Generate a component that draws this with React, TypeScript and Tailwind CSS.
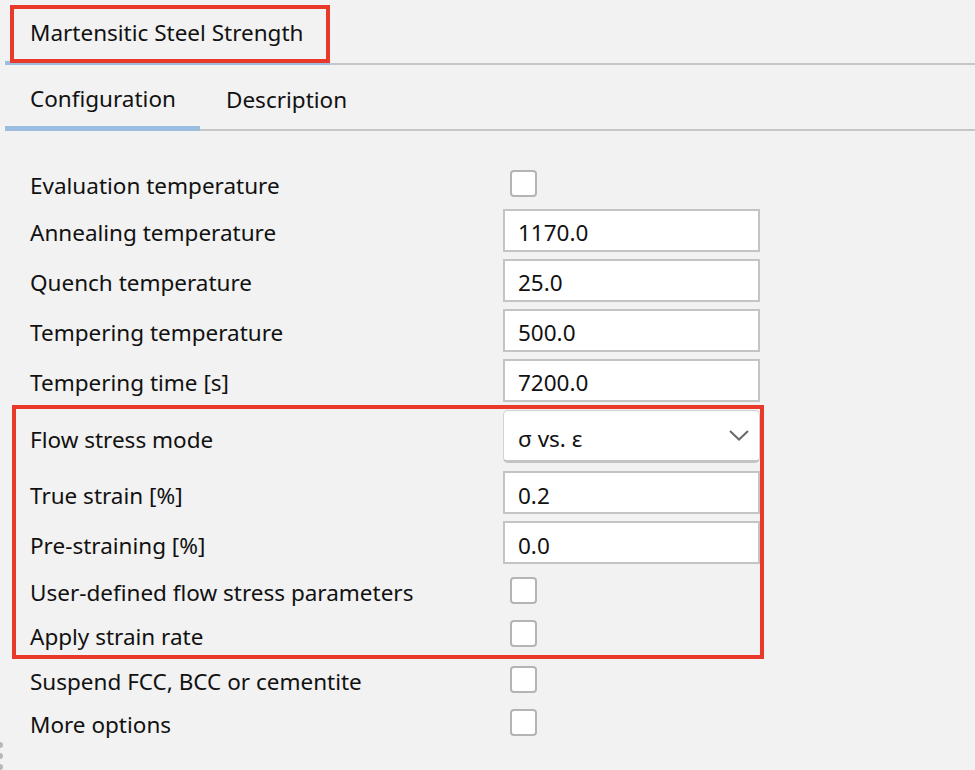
import React from 'react';

const font = { fontFamily: '"Noto Sans", "Open Sans", sans-serif' };

function Checkbox() {
  return <div className="ml-[7px] h-[27px] w-[27px] rounded-[4px] border-2 border-[#b4b4b4] bg-white" />;
}

function TextInput({ value }: { value: string }) {
  return (
    <div className="flex h-[43px] w-[257px] items-center border-2 border-[#c4c4c4] bg-white pl-[13px] pt-[6px]">
      {value}
    </div>
  );
}

function Row({ label, children, className = '' }: { label: string; children: React.ReactNode; className?: string }) {
  return (
    <div className={'flex items-center ' + className}>
      <div className="w-[473px] pt-[6px]">{label}</div>
      {children}
    </div>
  );
}

export default function App() {
  return (
    <div className="relative h-[770px] w-[975px] overflow-hidden bg-[#f2f2f2] text-[22.5px] text-[#111]" style={font}>
      {/* document tab */}
      <div className="flex h-[65px] items-end">
        <div className="ml-[5px] flex h-[64px] w-[325px] items-center border-b-4 border-[#9bbde0] pl-[25px] pt-[4px]">
          Martensitic Steel Strength
        </div>
        <div className="h-[2px] flex-1 bg-[#c6c6c6]" />
      </div>
      <div className="pointer-events-none absolute left-[10px] top-[5px] h-[58px] w-[320px] border-4 border-[#e8392b]" />

      {/* sub tabs */}
      <div className="flex h-[66px] items-end">
        <div className="ml-[5px] flex h-[65px] w-[195px] items-center border-b-[5px] border-[#9bbde0] pl-[25px] pt-[6px]">
          Configuration
        </div>
        <div className="flex h-[65px] flex-1 flex-col">
          <div className="flex flex-1 items-center pl-[26px] pt-[5px]">Description</div>
          <div className="h-[2px] bg-[#c6c6c6]" />
        </div>
      </div>

      {/* form */}
      <div className="flex flex-col pt-[30px]">
        <Row label="Evaluation temperature" className="ml-[30px] h-[44px]">
          <Checkbox />
        </Row>
        <Row label="Annealing temperature" className="ml-[30px] h-[50px]">
          <TextInput value="1170.0" />
        </Row>
        <Row label="Quench temperature" className="ml-[30px] h-[50px]">
          <TextInput value="25.0" />
        </Row>
        <Row label="Tempering temperature" className="ml-[30px] h-[50px]">
          <TextInput value="500.0" />
        </Row>
        <Row label="Tempering time [s]" className="ml-[30px] h-[50px]">
          <TextInput value="7200.0" />
        </Row>

        <div className="ml-[12px] flex w-[752px] flex-col border-4 border-[#e8392b] pl-[14px]">
          <Row label="Flow stress mode" className="mt-[1px]">
            <div className="flex h-[53px] w-[257px] items-center justify-between rounded-[5px] border border-[#d2d2d2] border-b-[3px] border-b-[#c4c4c4] bg-white pl-[14px] pr-[10px]">
              <span className="pt-[6px]">σ vs. ε</span>
              <svg width="20" height="11" viewBox="0 0 20 11" fill="none">
                <path d="M1 1l9 8.5L19 1" stroke="#6a6a6a" strokeWidth="2" />
              </svg>
            </div>
          </Row>
          <Row label="True strain [%]" className="mt-[8px]">
            <TextInput value="0.2" />
          </Row>
          <Row label="Pre-straining [%]" className="mt-[7px]">
            <TextInput value="0.0" />
          </Row>
          <Row label="User-defined flow stress parameters" className="mt-[4px] h-[44px]">
            <Checkbox />
          </Row>
          <Row label="Apply strain rate" className="h-[43px]">
            <Checkbox />
          </Row>
        </div>

        <Row label="Suspend FCC, BCC or cementite" className="ml-[30px] h-[40px]">
          <Checkbox />
        </Row>
        <Row label="More options" className="ml-[30px] h-[46px]">
          <Checkbox />
        </Row>
      </div>

      {/* splitter grip */}
      <div className="absolute left-[-3px] top-[742px] flex flex-col gap-[5px]">
        <div className="h-[6px] w-[6px] rounded-full bg-[#b8b8b8]" />
        <div className="h-[6px] w-[6px] rounded-full bg-[#b8b8b8]" />
        <div className="h-[6px] w-[6px] rounded-full bg-[#b8b8b8]" />
      </div>
    </div>
  );
}
